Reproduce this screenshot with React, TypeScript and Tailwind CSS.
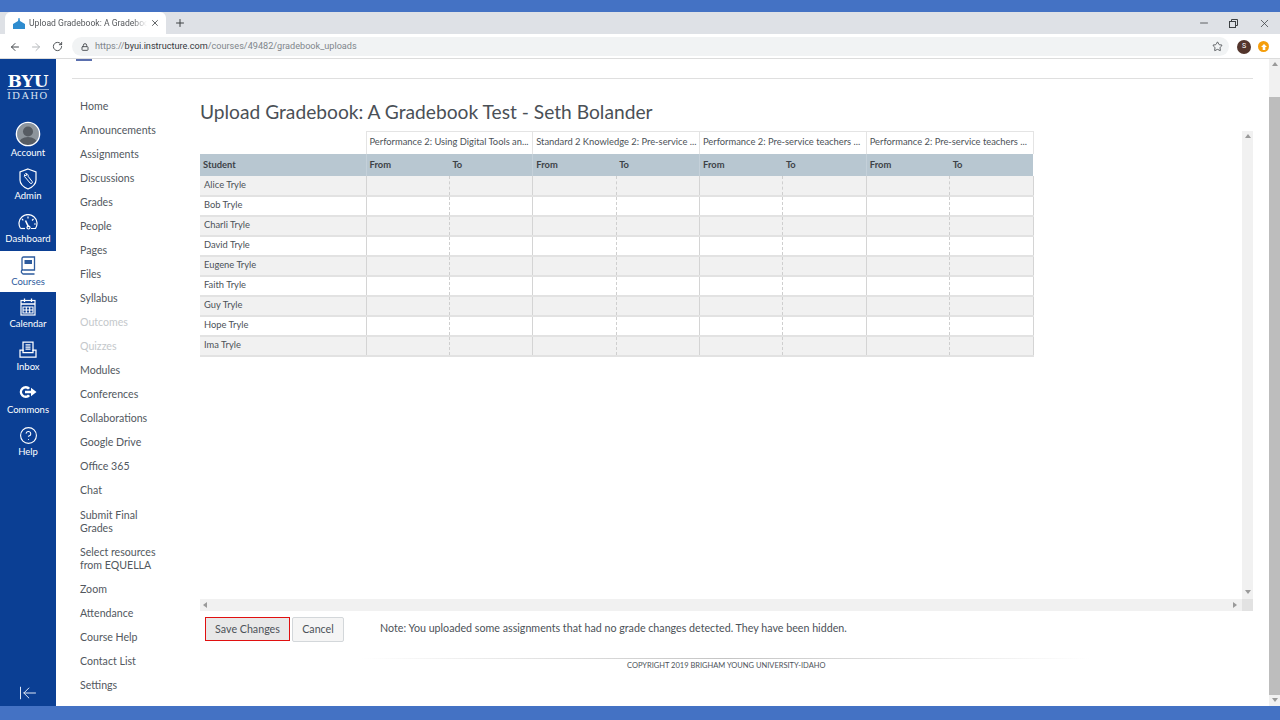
import React from 'react';
import { ArrowLeft, ArrowRight, RotateCw, Lock, Star, X, Plus, Minus, CircleHelp, ArrowLeftToLine } from 'lucide-react';

const STUDENTS = ['Alice Tryle', 'Bob Tryle', 'Charli Tryle', 'David Tryle', 'Eugene Tryle', 'Faith Tryle', 'Guy Tryle', 'Hope Tryle', 'Ima Tryle'];

const GROUPS = [
    'Performance 2: Using Digital Tools an...',
    'Standard 2 Knowledge 2: Pre-service ...',
    'Performance 2: Pre-service teachers ...',
    'Performance 2: Pre-service teachers ...',
];

const COURSE_LINKS = [
    { label: 'Home' }, { label: 'Announcements' }, { label: 'Assignments' }, { label: 'Discussions' },
    { label: 'Grades' }, { label: 'People' }, { label: 'Pages' }, { label: 'Files' }, { label: 'Syllabus' },
    { label: 'Outcomes', off: true }, { label: 'Quizzes', off: true }, { label: 'Modules' }, { label: 'Conferences' },
    { label: 'Collaborations' }, { label: 'Google Drive' }, { label: 'Office 365' }, { label: 'Chat' },
    { label: 'Submit Final Grades', pushed: true }, { label: 'Select resources from EQUELLA' }, { label: 'Zoom' }, { label: 'Attendance' },
    { label: 'Course Help' }, { label: 'Contact List' }, { label: 'Settings' },
];

// ── Sidebar glyphs, drawn to follow the reference ──
const AccountIcon = () => (
    <svg width="26" height="26" viewBox="0 0 26 26">
        <defs><clipPath id="acc"><circle cx="13" cy="13" r="11" /></clipPath></defs>
        <circle cx="13" cy="13" r="11" fill="#8d959c" />
        <g clipPath="url(#acc)" fill="#565c63">
            <circle cx="13" cy="10.5" r="5" />
            <ellipse cx="13" cy="23" rx="9.5" ry="7" />
        </g>
        <circle cx="13" cy="13" r="11.6" fill="none" stroke="#fff" strokeWidth="1.4" />
    </svg>
);

const AdminIcon = () => (
    <svg width="20" height="22" viewBox="0 0 20 22" fill="none" stroke="#fff">
        <path d="M10 1 L18 4 V12 C18 16.5 13.5 19.5 10 21 C6.5 19.5 2 16.5 2 12 V4 Z" strokeWidth="1.2" />
        <path d="M6.6 6.6 a2.6 2.6 0 0 0 1.2 3.4 L12.2 15.2 a1.3 1.3 0 0 0 2-1.6 L10.2 8.4 a2.6 2.6 0 0 0-2.6-3 L8.8 7 L7.9 7.9 Z" strokeWidth="1" />
    </svg>
);

const DashboardIcon = () => (
    <svg width="22" height="16" viewBox="0 0 22 16" fill="none" stroke="#fff" strokeWidth="1.2">
        <path d="M3.5 14.5 A9 9 0 1 1 18.5 14.5 H14" />
        <path d="M3.5 14.5 H8" />
        <path d="M8.5 6.5 L11.5 13" strokeWidth="1.6" />
        <circle cx="11.5" cy="13.5" r="1.5" />
        <path d="M11 2.5 V4.5 M16.5 5 L15 6.5 M18.8 10 H17 M5 5 L6.3 6.3" />
    </svg>
);

const CoursesIcon = () => (
    <svg width="16" height="19" viewBox="0 0 16 19" fill="none" stroke="#2d5b9d">
        <path d="M2 15 V2.5 A1.5 1.5 0 0 1 3.5 1 H14.5 V14 H3.5 A1.7 1.7 0 0 0 2 17 A1.5 1.5 0 0 0 3.5 18 H14.5" strokeWidth="1.3" />
        <rect x="4.5" y="4" width="7.5" height="4" fill="#2d5b9d" stroke="none" />
    </svg>
);

const CalendarIcon = () => (
    <svg width="16" height="18" viewBox="0 0 16 18" fill="none" stroke="#fff">
        <rect x="1" y="2.5" width="14" height="14.5" strokeWidth="1.2" />
        <path d="M1 6 H15 M4.5 0.5 V4 M11.5 0.5 V4" strokeWidth="1.3" />
        <path d="M3 9 H13 V15 H3 Z M6.3 9 V15 M9.7 9 V15 M3 12 H13" strokeWidth="1.1" />
    </svg>
);

const InboxIcon = () => (
    <svg width="18" height="17" viewBox="0 0 18 17" fill="none" stroke="#fff" strokeWidth="1.25">
        <path d="M4 10 V1 H14 V10" />
        <path d="M6.5 3.8 H11.5 M6.5 6 H11.5 M6.5 8.2 H11.5" />
        <path d="M1 9 H4 V11.5 H14 V9 H17 V16 H1 Z" />
    </svg>
);

const CommonsIcon = () => (
    <svg width="18" height="14" viewBox="0 0 18 14" fill="#fff">
        <path d="M11.2 3 A6 6 0 1 0 11.2 11 L9 9.4 A3.4 3.4 0 1 1 9 4.6 Z" />
        <path d="M6 5.7 H12 V2.7 L17.5 7 L12 11.3 V8.3 H6 Z" />
    </svg>
);

const SIDE_ITEMS = [
    { label: 'Account', icon: <AccountIcon />, h: 'h-[44px]', gap: 'gap-[0px]' },
    { label: 'Admin', icon: <AdminIcon />, h: 'h-[46px]', gap: 'gap-[0px]' },
    { label: 'Dashboard', icon: <DashboardIcon />, h: 'h-[44px]', gap: 'gap-[3px]' },
    { label: 'Courses', icon: <CoursesIcon />, h: 'h-[41px]', gap: 'gap-[1px]', active: true },
    { label: 'Calendar', icon: <CalendarIcon />, h: 'h-[43px]', gap: 'gap-[2px]' },
    { label: 'Inbox', icon: <InboxIcon />, h: 'h-[43px]', gap: 'gap-[3px]' },
    { label: 'Commons', icon: <CommonsIcon />, h: 'h-[43px]', gap: 'gap-[5px]' },
    { label: 'Help', icon: <CircleHelp size={19} color="#fff" strokeWidth={1.4} />, h: 'h-[40px]', gap: 'gap-[1px]' },
];

const Scroller: React.FC<{ dir: 'up' | 'down' | 'left' | 'right'; className?: string }> = ({ dir, className }) => {
    const pts = { up: '0,4 3,0 6,4', down: '0,0 6,0 3,4', left: '4,0 4,6 0,3', right: '0,0 0,6 4,3' }[dir];
    return (
        <svg width="6" height="6" viewBox="0 0 6 6" className={className}>
            <polygon points={pts} fill="#9a9a9a" />
        </svg>
    );
};

const App: React.FC = () => {
    return (
        <div className="w-[1280px] h-[720px] overflow-hidden flex flex-col bg-white [font-family:Lato,sans-serif] text-[#4c5258]">
            <div className="h-3 bg-[#4472c4] shrink-0" />

            {/* ── Browser tab strip ── */}
            <div className="h-[22px] shrink-0 bg-[#dee1e6] flex items-end pl-[5px] [font-family:Roboto,sans-serif]">
                <div className="w-[161px] h-[22px] bg-white rounded-t-[6px] flex items-center pl-2 pr-[6px]">
                    <svg width="12" height="11" viewBox="0 0 12 11" className="shrink-0">
                        <path d="M0 11 V6 L2.5 4.5 L5 3 L5.5 0 H6.5 L7 3 L9.5 4.5 L12 6 V11 Z" fill="#2e8ccf" />
                    </svg>
                    <span className="ml-[4px] text-[8.6px] text-[#55585c] whitespace-nowrap overflow-hidden w-[119px] [mask-image:linear-gradient(to_right,black_88%,transparent)]">Upload Gradebook: A Gradebook</span>
                    <X size={10} className="ml-[3px] text-[#3c4043]" strokeWidth={2} />
                </div>
                <div className="h-[22px] flex items-center ml-[8px]">
                    <Plus size={12} className="text-[#3c4043]" strokeWidth={2} />
                </div>
                <div className="flex-1" />
                <div className="h-[22px] flex items-center gap-[19px] pr-[9px] text-[#3c4043]">
                    <Minus size={12} strokeWidth={1.6} />
                    <svg width="9" height="9" viewBox="0 0 9 9" fill="none" stroke="#3c4043" strokeWidth="1">
                        <rect x="0.5" y="2.5" width="6" height="6" />
                        <path d="M2.5 2.5 V0.5 H8.5 V6.5 H6.5" />
                    </svg>
                    <X size={13} strokeWidth={1.4} className="ml-[1px]" />
                </div>
            </div>

            {/* ── Browser toolbar ── */}
            <div className="h-[25px] shrink-0 bg-white border-b border-[#dcdcdc] flex items-center pl-[9px] pt-[1px] [font-family:Roboto,sans-serif]">
                <ArrowLeft size={12} className="text-[#45494d]" strokeWidth={2} />
                <ArrowRight size={12} className="ml-[9px] text-[#b5b8bb]" strokeWidth={2} />
                <RotateCw size={11} className="ml-[10px] text-[#45494d]" strokeWidth={2} />
                <div className="ml-[9px] w-[1157px] h-[19px] rounded-full bg-[#f1f3f4] flex items-center pl-[9px] pr-[6px]">
                    <Lock size={8} className="text-[#55585c]" strokeWidth={3} />
                    <span className="ml-[6px] text-[9.15px] text-[#80868b] whitespace-nowrap">
                        https://<span className="text-[#35383c]">byui.instructure.com</span>/courses/49482/gradebook_uploads
                    </span>
                    <Star size={11} className="ml-auto text-[#45494d]" strokeWidth={1.8} />
                </div>
                <div className="ml-[8px] w-[14px] h-[14px] rounded-full bg-[#53352c] text-white text-[7px] flex items-center justify-center">S</div>
                <div className="ml-[7px] w-[11px] h-[11px] rounded-full bg-[#f59e0b] flex items-center justify-center">
                    <svg width="6" height="6" viewBox="0 0 6 6">
                        <path d="M3 0 L6 3 H4.3 V6 H1.7 V3 H0 Z" fill="#fff" />
                    </svg>
                </div>
            </div>

            <div className="flex-1 min-h-0 flex">
                {/* ── Global nav ── */}
                <aside className="w-14 shrink-0 bg-[#0b3f94] flex flex-col text-white">
                    <div className="h-[58px] shrink-0 flex flex-col items-center pt-[15px]">
                        <span className="[font-family:'DejaVu_Serif',serif] font-bold text-[17px] leading-[14px] tracking-[0px] border-b border-[#8ba6d0] pb-[1px]">BYU</span>
                        <span className="[font-family:'Liberation_Serif',serif] text-[10.5px] leading-[12px] tracking-[1.5px] text-[#dce4f2]">IDAHO</span>
                    </div>
                    {SIDE_ITEMS.map(item => (
                        <div
                            key={item.label}
                            className={`${item.h} shrink-0 flex flex-col items-center justify-center ${item.gap} ${item.active ? 'bg-white text-[#2d5b9d]' : ''}`}
                        >
                            {item.icon}
                            <span className="text-[9.5px] leading-[11px]">{item.label}</span>
                        </div>
                    ))}
                    <div className="mt-auto pb-[3px] flex justify-center">
                        <ArrowLeftToLine size={20} strokeWidth={1.2} color="#dfe7f5" />
                    </div>
                </aside>

                {/* ── Page ── */}
                <div className="flex-1 min-w-0 pl-4 flex flex-col">
                    <div className="w-[16px] h-[2px] bg-[#5a6fae] ml-[4px] shrink-0" />
                    <div className="h-[18px] w-[1181px] border-b border-[#dfdfdf] shrink-0" />

                    <div className="flex flex-1 min-h-0">
                        {/* Course nav */}
                        <nav className="w-[128px] shrink-0 pl-[8px] pt-[15px] text-[10.6px] leading-[13px] text-[#52585e]">
                            {COURSE_LINKS.map(link => (
                                <div key={link.label} className={`py-[5.5px] w-[84px] ${link.off ? 'text-[#c4c8cb]' : ''} ${link.pushed ? 'mt-[1px]' : ''}`}>{link.label}</div>
                            ))}
                        </nav>

                        {/* Content */}
                        <main className="w-[1053px] shrink-0 flex flex-col">
                            <h1 className="text-[19.2px] leading-[24px] font-normal text-[#4a5056] mt-[21px] h-[31px] whitespace-nowrap">Upload Gradebook: A Gradebook Test - Seth Bolander</h1>

                            <div className="h-[468px] flex shrink-0">
                                <div className="flex-1">
                                    <table className="w-[833.5px] table-fixed border-collapse text-[9.35px]">
                                        <colgroup>
                                            <col className="w-[166px]" />
                                            {Array.from({ length: 8 }).map((_, i) => <col key={i} />)}
                                        </colgroup>
                                        <thead>
                                            <tr className="h-[22px]">
                                                <th className="p-0" />
                                                {GROUPS.map((g, i) => (
                                                    <th key={i} colSpan={2} className="p-0 pl-[3px] pb-[1px] text-left font-normal border-l border-r border-t border-[#e4e4e4] whitespace-nowrap overflow-hidden">{g}</th>
                                                ))}
                                            </tr>
                                            <tr className="h-[22px] bg-[#b8c7d1] text-[#3d4247]">
                                                <th className="p-0 pl-[3px] pt-[1px] text-left font-bold">Student</th>
                                                {GROUPS.map((_, i) => (
                                                    <React.Fragment key={i}>
                                                        <th className="p-0 pl-[3px] pt-[1px] text-left font-bold border-l border-[#c4d0d9]">From</th>
                                                        <th className="p-0 pl-[3px] pt-[1px] text-left font-bold">To</th>
                                                    </React.Fragment>
                                                ))}
                                            </tr>
                                        </thead>
                                        <tbody>
                                            {STUDENTS.map((s, r) => (
                                                <tr key={s} className={`h-[20px] border-b-2 border-[#e2e2e2] ${r % 2 === 0 ? 'bg-[#f1f1f1]' : 'bg-white'}`}>
                                                    <td className="p-0 pl-[4px] overflow-hidden whitespace-nowrap">{s}</td>
                                                    {GROUPS.map((_, i) => (
                                                        <React.Fragment key={i}>
                                                            <td className="p-0 border-l border-[#d4d4d4]" />
                                                            <td className={`p-0 border-l border-l-[#cfcfcf] [border-left-style:dashed] ${i === 3 ? 'border-r border-r-[#d4d4d4]' : ''}`} />
                                                        </React.Fragment>
                                                    ))}
                                                </tr>
                                            ))}
                                        </tbody>
                                    </table>
                                </div>
                                <div className="w-[11px] bg-[#f1f1f1] flex flex-col items-center justify-between py-[3px]">
                                    <Scroller dir="up" />
                                    <Scroller dir="down" />
                                </div>
                            </div>

                            <div className="h-[12px] shrink-0 bg-[#f1f1f1] flex items-center justify-between pl-[3px]">
                                <Scroller dir="left" />
                                <div className="flex items-center h-full">
                                    <Scroller dir="right" className="mr-[3px]" />
                                    <div className="w-[11px] h-full bg-[#e2e2e2]" />
                                </div>
                            </div>

                            <div className="flex items-center pl-[5px] mt-[5px] h-[26px] shrink-0 text-[10.7px]">
                                <button className="w-[85px] h-[24px] bg-[#e8e8e8] border border-[#e01010] text-[#4c5258]">Save Changes</button>
                                <button className="ml-[2px] w-[52px] h-[25px] bg-[#f5f5f5] border border-[#d3d7da] rounded-[2px] text-[#4c5258]">Cancel</button>
                                <span className="ml-[36px] pb-[2px]">Note: You uploaded some assignments that had no grade changes detected. They have been hidden.</span>
                            </div>

                            <div className="mt-[16px] ml-[160px] w-[730px] h-px shrink-0 bg-gradient-to-r from-transparent via-[#c4c4c4] to-transparent" />
                            <p className="text-[7.5px] leading-[12px] mt-[1px] ml-[427px] whitespace-nowrap uppercase">Copyright 2019 Brigham Young University-Idaho</p>
                        </main>
                    </div>
                </div>

                {/* ── Page scrollbar ── */}
                <div className="w-[11px] shrink-0 bg-[#f1f1f1] flex flex-col items-center">
                    <Scroller dir="up" className="mt-[3px]" />
                    <div className="w-full h-[598px] mt-[29px] bg-[#bdbdbd]" />
                    <Scroller dir="down" className="mt-[3px]" />
                </div>
            </div>

            <div className="h-[14px] shrink-0 bg-[#4472c4]" />
        </div>
    );
};

export default App;
